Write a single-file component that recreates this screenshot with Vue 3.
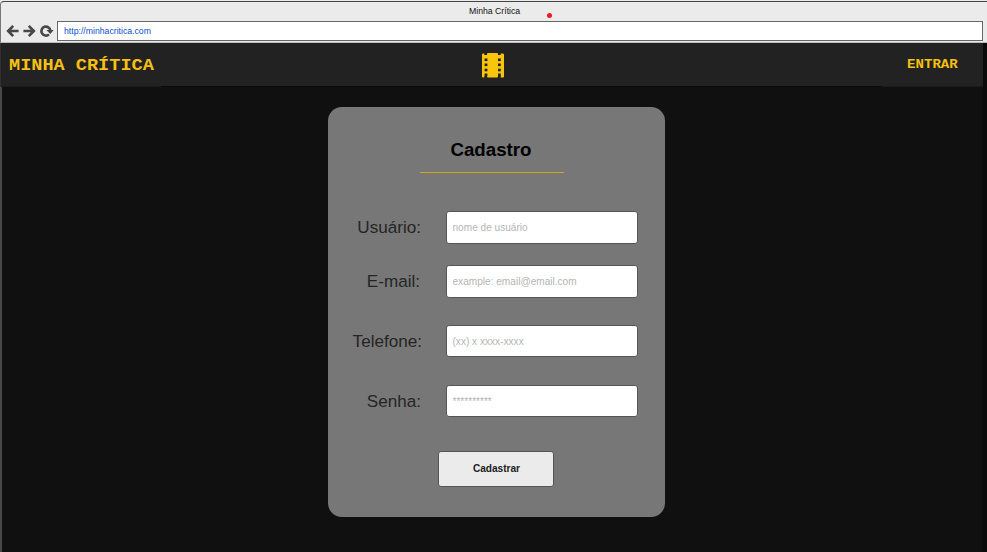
<script setup>
const fields = [
  { id: 'usuario', label: 'Usuário:', hint: 'nome de usuário' },
  { id: 'email', label: 'E-mail:', hint: 'example: email@email.com' },
  { id: 'telefone', label: 'Telefone:', hint: '(xx) x xxxx-xxxx' },
  { id: 'senha', label: 'Senha:', hint: '**********' },
]
const holes = [6.5, 11.5, 16.7, 21.5]
</script>

<template>
  <div class="window">
    <div class="browser">
      <div class="title">Minha Crítica<span class="dot"></span></div>
      <div class="toolbar">
        <svg class="controls" width="49" height="16" viewBox="0 0 49 16" fill="none" stroke="#484848" stroke-width="2.7">
          <path d="M12.6 8H2.5M7.2 2.9L2.2 8l5 5.1" />
          <path d="M17.4 8h10M22.8 2.9L27.8 8l-5 5.1" />
          <path d="M43 11.4A4.5 4.5 0 1 1 44.4 7.6" stroke-width="2.6" />
          <path d="M40.4 7H47.6L44.4 11z" fill="#484848" stroke="none" />
        </svg>
        <div class="address">http://minhacritica.com</div>
      </div>
    </div>
    <header class="nav">
      <div class="brand"><span>MINHA CRÍTICA</span></div>
      <div class="middle">
        <svg width="24" height="27" viewBox="0 0 24 27">
          <path d="M1 2.5Q1 1.5 2 1.5H3.3V3H6V2Q6 1 7 1H16Q17 1 17 2V3H19.7V1.5H21.5Q23 1.5 23 2.5V24.5Q23 25.5 22 25.5H19.7V24H17V24.5Q17 25.5 16 25.5H7Q6 25.5 6 24.5V24H3.3V25.5H2Q1 25.5 1 24.5Z" fill="#f8c40c" />
          <g v-for="y in holes" :key="y" fill="#222222">
            <rect x="3.6" :y="y" width="2.8" height="2.6" />
            <rect x="17" :y="y" width="2.8" height="2.6" />
          </g>
        </svg>
      </div>
      <div class="enter"><span>ENTRAR</span></div>
    </header>
    <main class="content">
      <form class="card" @submit.prevent>
        <h1>Cadastro</h1>
        <div class="fields">
          <div v-for="field in fields" :key="field.id" class="row" :class="field.id">
            <label :for="field.id">{{ field.label }}</label>
            <input :id="field.id" type="text" :placeholder="field.hint" />
          </div>
        </div>
        <button type="submit">Cadastrar</button>
      </form>
    </main>
  </div>
</template>

<style>
body {
  background: #0b0b0b;
  overflow: hidden;
}
</style>

<style scoped>
* {
  box-sizing: border-box;
}
.window {
  width: 987px;
  height: 552px;
  display: flex;
  flex-direction: column;
  overflow: hidden;
  padding-top: 1px;
  font-family: "Liberation Sans", Arial, sans-serif;
  background: linear-gradient(#ebebeb 6px, #0b0b0b 6px);
}
.browser {
  height: 42px;
  flex: none;
  background: #ebebeb;
  border-left: 1px solid #777;
  border-top: 1px solid #444;
  border-bottom: 1px solid #b8bcbb;
  border-top-left-radius: 4px;
}
.title {
  position: relative;
  height: 19px;
  padding-left: 468px;
  font-size: 8.7px;
  line-height: 19px;
  color: #111;
}
.dot {
  position: absolute;
  left: 546px;
  top: 11px;
  width: 5px;
  height: 5px;
  border-radius: 50%;
  background: #ed1c24;
}
.toolbar {
  display: flex;
  align-items: center;
  height: 20px;
  padding-left: 5px;
}
.controls {
  flex: none;
}
.address {
  width: 926px;
  height: 20px;
  margin-left: 2px;
  padding-left: 6px;
  border: 1px solid #666;
  background: #fff;
  color: #0b50cc;
  font-size: 8.7px;
  line-height: 18px;
}
.nav {
  flex: none;
  display: flex;
  width: 983px;
  height: 44px;
  background: #222;
  border-left: 1px solid #303030;
}
.brand,
.enter {
  font-family: "Liberation Mono", "Courier New", monospace;
  font-weight: 700;
  color: #f6c012;
  white-space: nowrap;
  border-bottom: 1px solid #1b1b1b;
}
.brand span,
.enter span {
  display: inline-block;
  transform-origin: 0 50%;
}
.brand {
  width: 160px;
  padding-left: 8px;
  font-size: 16px;
  line-height: 46px;
}
.brand span {
  transform: scaleX(1.16);
}
.middle {
  width: 721px;
  padding: 9px 0 0 319.5px;
  border-bottom: 1px solid #0a0a0a;
}
.middle svg {
  display: block;
}
.enter {
  width: 101px;
  padding-left: 25px;
  font-size: 12.6px;
  line-height: 44px;
}
.enter span {
  transform: scaleX(1.12);
}
.content {
  flex: 1;
  width: 983px;
  padding: 20px 0 0 326px;
  background: #101010;
  border-left: 2px solid #484848;
}
.card {
  display: flex;
  flex-direction: column;
  width: 337px;
  height: 410px;
  background: #777;
  border-radius: 14px;
}
h1 {
  align-self: flex-start;
  width: 144px;
  height: 40px;
  margin: 26px 0 0 92px;
  padding-right: 2px;
  border-bottom: 1px solid #cfa51d;
  font-size: 18.7px;
  line-height: 33px;
  text-align: center;
  color: #000;
}
.fields {
  display: flex;
  flex-direction: column;
  margin-top: 38px;
}
.row {
  display: flex;
  align-items: center;
  height: 33px;
}
.email {
  margin-top: 21px;
}
.telefone,
.senha {
  height: 32px;
  margin-top: 27px;
}
.senha {
  margin-top: 28px;
}
label {
  width: 93px;
  margin-right: 25px;
  text-align: right;
  white-space: nowrap;
  font-size: 17.1px;
  line-height: 32px;
  color: #252525;
}
.email label {
  width: 92px;
  margin-right: 26px;
}
.telefone label {
  width: 94px;
  margin-right: 24px;
}
.telefone label,
.senha label {
  padding-top: 2px;
}
input {
  width: 192px;
  height: 100%;
  padding: 0 5px 0 5.5px;
  border: 1px solid #555;
  border-radius: 3px;
  background: #fff;
  font: 10.1px "Liberation Sans", Arial, sans-serif;
  outline: 0;
}
input::placeholder {
  color: #b5b5b5;
  opacity: 1;
}
button {
  width: 116px;
  height: 36px;
  margin: 34px 0 0 110px;
  padding: 0 0 1px 1px;
  border: 1px solid #555;
  border-radius: 3px;
  background: #ebebeb;
  color: #222;
  font: bold 10.1px "Liberation Sans", Arial, sans-serif;
}
</style>
